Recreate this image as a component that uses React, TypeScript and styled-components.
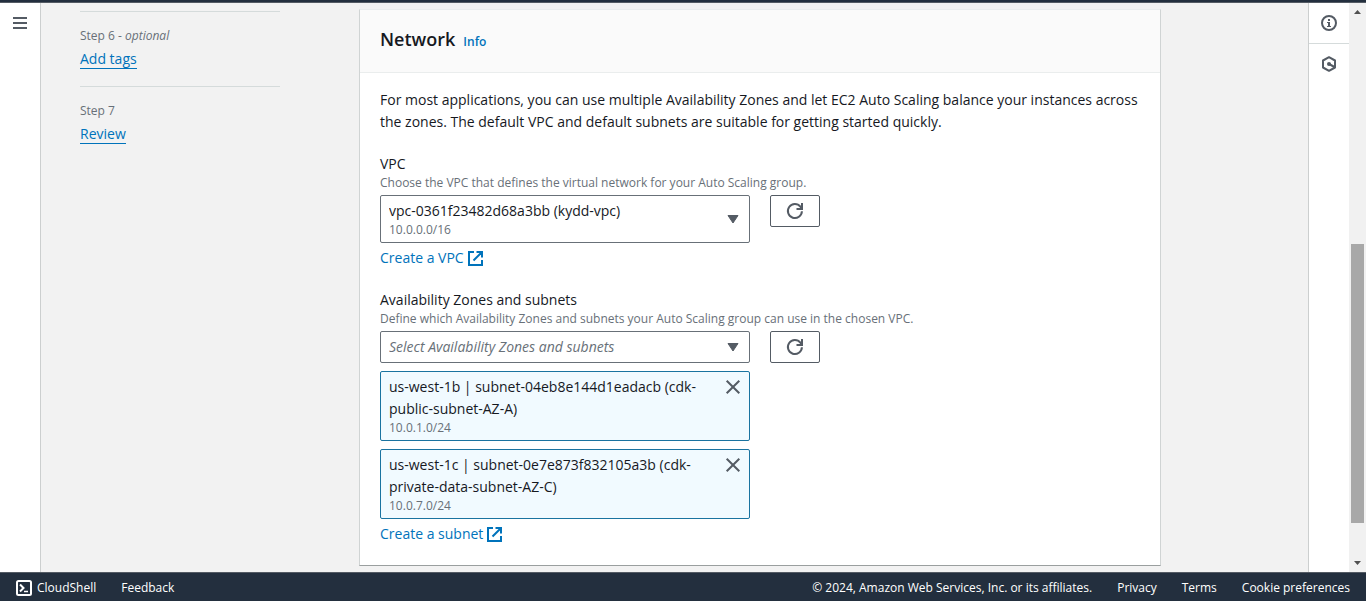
import React from "react";
import styled, { createGlobalStyle } from "styled-components";

const GlobalStyle = createGlobalStyle`
  *, *::before, *::after { box-sizing: border-box; }
  body {
    margin: 0;
    background: #f2f2f2;
    color: #16191f;
    font-family: "Open Sans", "Noto Sans", sans-serif;
    font-size: 14px;
    line-height: 22px;
  }
  button, select { font: inherit; color: inherit; }
`;

const Page = styled.div`
  display: flex;
  flex-direction: column;
  min-height: 100vh;
`;

const TopBar = styled.header`
  height: 3px;
  background: #232f3e;
  border-bottom: 1px solid #545b64;
`;

const Body = styled.div`
  display: flex;
  flex: 1;
`;

const LeftRail = styled.aside`
  flex: none;
  width: 41px;
  padding-top: 5px;
  background: #fff;
  border-right: 1px solid #cccfcf;
`;

const RailButton = styled.button`
  display: flex;
  align-items: center;
  justify-content: center;
  width: 40px;
  height: 30px;
  padding: 0;
  border: 0;
  background: none;
  color: #545b64;
`;

const RightRail = styled.aside`
  flex: none;
  width: 41px;
  background: #fff;
  border-left: 1px solid #cccfcf;
`;

const ToolButton = styled(RailButton)<{ $divided?: boolean }>`
  height: 41px;
  border-bottom: 1px solid ${(p) => (p.$divided ? "#d5dbdb" : "transparent")};
`;

const Content = styled.main`
  display: grid;
  grid-template-columns: 200px minmax(0, 1fr);
  column-gap: 79px;
  align-items: start;
  flex: 1;
  padding: 6px 147px 6px 39px;
`;

const Steps = styled.ol`
  margin: 2px 0 0;
  padding: 0;
  list-style: none;
`;

const Step = styled.li`
  padding: 14px 0 16px;
  border-top: 1px solid #d5dbdb;
`;

const StepLabel = styled.div`
  margin-bottom: 2px;
  color: #687078;
  font-size: 12px;
  line-height: 20px;
`;

const StepLink = styled.a`
  color: #0073bb;
  text-decoration: none;
  border-bottom: 1px solid #0073bb;
`;

const Card = styled.section`
  background: #fff;
  border: 1px solid #d0d4d4;
  border-top-color: #eaeded;
  border-bottom-color: #9a9f9f;
`;

const CardHeader = styled.div`
  display: flex;
  align-items: baseline;
  gap: 8px;
  padding: 18px 20px 22px;
  background: #fafafa;
  border-bottom: 1px solid #eaeded;
`;

const CardTitle = styled.h2`
  margin: 0;
  font-size: 18px;
  line-height: 22px;
  font-weight: 600;
`;

const InfoLink = styled.a`
  color: #0073bb;
  font-size: 12px;
  line-height: 16px;
  font-weight: 600;
  text-decoration: none;
`;

const CardBody = styled.div`
  display: flex;
  flex-direction: column;
  gap: 20px;
  padding: 16px 20px 20px;
`;

const Intro = styled.p`
  margin: 0;
`;

const Field = styled.div`
  display: flex;
  flex-direction: column;
  align-items: flex-start;
`;

const FieldLabel = styled.label`
  display: block;
`;

const Hint = styled.div`
  margin-bottom: 4px;
  color: #687078;
  font-size: 12px;
  line-height: 16px;
`;

const ControlRow = styled.div`
  display: flex;
  align-items: flex-start;
  gap: 20px;
`;

const SelectWrap = styled.div`
  position: relative;
  width: 370px;
`;

const Select = styled.select<{ $detailed?: boolean }>`
  appearance: none;
  display: block;
  width: 100%;
  height: ${(p) => (p.$detailed ? 48 : 32)}px;
  padding: ${(p) => (p.$detailed ? "0 36px 16px 8px" : "0 36px 0 8px")};
  border: 1px solid #687078;
  border-radius: 2px;
  background: #fff;
  color: ${(p) => (p.$detailed ? "#16191f" : "#687078")};
  font-style: ${(p) => (p.$detailed ? "normal" : "italic")};
`;

const SelectDetail = styled.span`
  position: absolute;
  left: 9px;
  bottom: 5px;
  color: #687078;
  font-size: 12px;
  line-height: 16px;
  pointer-events: none;
`;

const Caret = styled.svg`
  position: absolute;
  top: 50%;
  right: 11px;
  margin-top: -4px;
  pointer-events: none;
`;

const RefreshButton = styled.button`
  display: flex;
  align-items: center;
  justify-content: center;
  width: 50px;
  height: 32px;
  padding: 0;
  border: 1px solid #545b64;
  border-radius: 2px;
  background: #fff;
  color: #545b64;
`;

const ExternalLink = styled.a`
  display: flex;
  align-items: center;
  gap: 4px;
  margin-top: 4px;
  color: #0073bb;
  text-decoration: none;
`;

const TokenList = styled.ul`
  display: flex;
  flex-direction: column;
  gap: 8px;
  width: 370px;
  margin: 8px 0 0;
  padding: 0;
  list-style: none;
`;

const Token = styled.li`
  display: flex;
  justify-content: space-between;
  align-items: flex-start;
  padding: 4px 8px;
  border: 1px solid #1a73a0;
  border-radius: 2px;
  background: #f1faff;
`;

const TokenText = styled.div`
  width: 310px;
`;

const TokenDetail = styled.div`
  color: #687078;
  font-size: 12px;
  line-height: 16px;
`;

const RemoveButton = styled.button`
  display: flex;
  align-items: center;
  height: 22px;
  padding: 0;
  border: 0;
  background: none;
  color: #545b64;
`;

const ScrollTrack = styled.div`
  display: flex;
  flex-direction: column;
  align-items: center;
  flex: none;
  width: 17px;
  background: #f1f1f1;
`;

const ScrollArrow = styled.svg`
  flex: none;
`;

const ScrollSpace = styled.div<{ $grow: number }>`
  flex: ${(p) => p.$grow} 0 0;
`;

const ScrollThumb = styled(ScrollSpace)`
  width: 13px;
  background: #a8a8a8;
`;

const Footer = styled.footer`
  display: flex;
  align-items: center;
  justify-content: space-between;
  padding: 4px 16px 3px;
  border-top: 1px solid #545b64;
  background: #232f3e;
  color: #fff;
  font-size: 12px;
  line-height: 21px;
`;

const FooterGroup = styled.div<{ $gap: number }>`
  display: flex;
  align-items: center;
  gap: ${(p) => p.$gap}px;
`;

const FooterButton = styled.button`
  display: flex;
  align-items: center;
  gap: 5px;
  padding: 0;
  border: 0;
  background: none;
  font-weight: 500;
`;

const FooterLink = styled.a`
  color: #fff;
  font-weight: 500;
  text-decoration: none;
`;

const Copyright = styled.span`
  font-weight: 500;
`;

const steps = [
  { label: "Step 6", optional: true, title: "Add tags" },
  { label: "Step 7", optional: false, title: "Review" },
];

const subnets = [
  { name: "us-west-1b | subnet-04eb8e144d1eadacb (cdk-public-subnet-AZ-A)", cidr: "10.0.1.0/24" },
  { name: "us-west-1c | subnet-0e7e873f832105a3b (cdk-private-data-subnet-AZ-C)", cidr: "10.0.7.0/24" },
];

const CaretIcon = () => (
  <Caret width="12" height="9" viewBox="0 0 12 9" aria-hidden="true">
    <path d="M1 .5h10L6 8z" fill="#545b64" stroke="#545b64" strokeWidth="1" strokeLinejoin="round" />
  </Caret>
);

const RefreshIcon = () => (
  <svg width="18" height="18" viewBox="0 0 18 18" fill="none" stroke="currentColor" strokeWidth="2" aria-hidden="true">
    <path d="M15.9 9.2a7 7 0 1 1-1.5-4.5l1.4 1.9" />
    <path d="M16 1v6h-5.5" />
  </svg>
);

const ExternalIcon = () => (
  <svg width="15" height="15" viewBox="0 0 15 15" fill="none" stroke="currentColor" strokeWidth="2" aria-hidden="true">
    <path d="M6 1H1v13h13V9" />
    <path d="M8.5 1H14v5.5M13.8 1.2L5.5 9.5" />
  </svg>
);

const RemoveIcon = () => (
  <svg width="16" height="16" viewBox="0 0 16 16" fill="none" stroke="currentColor" strokeWidth="2" aria-hidden="true">
    <path d="M1.7 1.7l12.6 12.6M14.3 1.7L1.7 14.3" />
  </svg>
);

export default function App() {
  return (
    <>
      <GlobalStyle />
      <Page>
        <TopBar />
        <Body>
          <LeftRail>
            <RailButton aria-label="Open navigation">
              <svg width="14" height="12" viewBox="0 0 14 12" fill="currentColor" aria-hidden="true">
                <path d="M0 0h14v2H0zM0 5h14v2H0zM0 10h14v2H0z" />
              </svg>
            </RailButton>
          </LeftRail>

          <Content>
            <nav aria-label="Steps">
              <Steps>
                {steps.map((s) => (
                  <Step key={s.title}>
                    <StepLabel>
                      {s.label}
                      {s.optional && (
                        <>
                          {" - "}
                          <em>optional</em>
                        </>
                      )}
                    </StepLabel>
                    <StepLink href="#">{s.title}</StepLink>
                  </Step>
                ))}
              </Steps>
            </nav>

            <Card>
              <CardHeader>
                <CardTitle>Network</CardTitle>
                <InfoLink href="#">Info</InfoLink>
              </CardHeader>
              <CardBody>
                <Intro>
                  For most applications, you can use multiple Availability Zones and let EC2 Auto Scaling balance your
                  instances across the zones. The default VPC and default subnets are suitable for getting started
                  quickly.
                </Intro>

                <Field>
                  <FieldLabel htmlFor="vpc">VPC</FieldLabel>
                  <Hint>Choose the VPC that defines the virtual network for your Auto Scaling group.</Hint>
                  <ControlRow>
                    <SelectWrap>
                      <Select id="vpc" $detailed>
                        <option>vpc-0361f23482d68a3bb (kydd-vpc)</option>
                      </Select>
                      <SelectDetail>10.0.0.0/16</SelectDetail>
                      <CaretIcon />
                    </SelectWrap>
                    <RefreshButton aria-label="Refresh VPCs">
                      <RefreshIcon />
                    </RefreshButton>
                  </ControlRow>
                  <ExternalLink href="#">
                    Create a VPC <ExternalIcon />
                  </ExternalLink>
                </Field>

                <Field>
                  <FieldLabel htmlFor="subnets">Availability Zones and subnets</FieldLabel>
                  <Hint>
                    Define which Availability Zones and subnets your Auto Scaling group can use in the chosen VPC.
                  </Hint>
                  <ControlRow>
                    <SelectWrap>
                      <Select id="subnets">
                        <option>Select Availability Zones and subnets</option>
                      </Select>
                      <CaretIcon />
                    </SelectWrap>
                    <RefreshButton aria-label="Refresh subnets">
                      <RefreshIcon />
                    </RefreshButton>
                  </ControlRow>
                  <TokenList>
                    {subnets.map((s) => (
                      <Token key={s.cidr}>
                        <TokenText>
                          {s.name}
                          <TokenDetail>{s.cidr}</TokenDetail>
                        </TokenText>
                        <RemoveButton aria-label="Remove subnet">
                          <RemoveIcon />
                        </RemoveButton>
                      </Token>
                    ))}
                  </TokenList>
                  <ExternalLink href="#">
                    Create a subnet <ExternalIcon />
                  </ExternalLink>
                </Field>
              </CardBody>
            </Card>
          </Content>

          <RightRail>
            <ToolButton $divided aria-label="Info panel">
              <svg width="16" height="16" viewBox="0 0 16 16" fill="none" stroke="currentColor" aria-hidden="true">
                <circle cx="8" cy="8" r="7" strokeWidth="2" />
                <path d="M7 4h2v2H7zM6 7h3v4h1v1H6v-1h1V8H6z" fill="currentColor" stroke="none" />
              </svg>
            </ToolButton>
            <ToolButton aria-label="Tutorials">
              <svg width="16" height="16" viewBox="0 0 16 16" fill="none" stroke="currentColor" strokeWidth="2" aria-hidden="true">
                <path d="M8 1.2l6 3.3v7L8 14.8l-6-3.3v-7z" strokeLinejoin="round" />
                <circle cx="8" cy="8" r="2" fill="currentColor" stroke="none" />
                <path d="M8 8l5.5 3" />
              </svg>
            </ToolButton>
          </RightRail>

          <ScrollTrack aria-hidden="true">
            <ScrollArrow width="17" height="17" viewBox="0 0 17 17">
              <path d="M5 11l3.5-4 3.5 4z" fill="#505050" />
            </ScrollArrow>
            <ScrollSpace $grow={224} />
            <ScrollThumb $grow={279} />
            <ScrollSpace $grow={32} />
            <ScrollArrow width="17" height="17" viewBox="0 0 17 17">
              <path d="M5 6l3.5 4L12 6z" fill="#505050" />
            </ScrollArrow>
          </ScrollTrack>
        </Body>

        <Footer>
          <FooterGroup $gap={25}>
            <FooterButton>
              <svg width="16" height="16" viewBox="0 0 16 16" fill="none" stroke="currentColor" strokeWidth="2" aria-hidden="true">
                <rect x="1" y="1" width="14" height="14" rx="1.5" />
                <path d="M4 4.5l3.5 3.5L4 11.5" />
                <path d="M8 11.5h4" strokeWidth="1.5" />
              </svg>
              CloudShell
            </FooterButton>
            <FooterButton>Feedback</FooterButton>
          </FooterGroup>
          <FooterGroup $gap={25}>
            <Copyright>© 2024, Amazon Web Services, Inc. or its affiliates.</Copyright>
            <FooterLink href="#">Privacy</FooterLink>
            <FooterLink href="#">Terms</FooterLink>
            <FooterLink href="#">Cookie preferences</FooterLink>
          </FooterGroup>
        </Footer>
      </Page>
    </>
  );
}
